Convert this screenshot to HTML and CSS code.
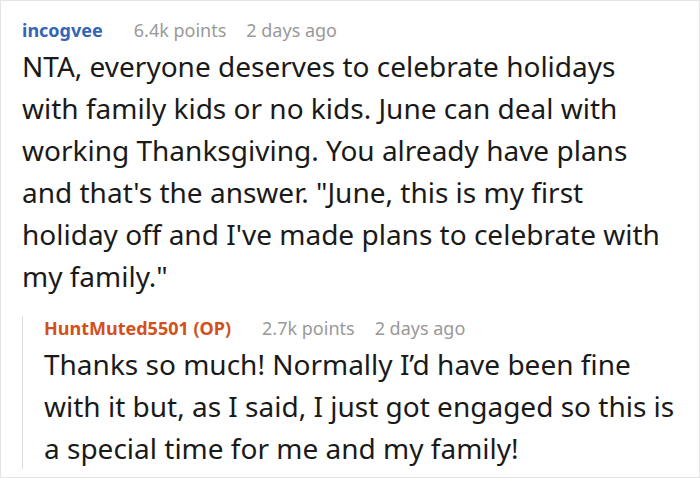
FILE: index.html
```html
<!DOCTYPE html>
<html>
<head>
<meta charset="utf-8">
<link rel="stylesheet" href="styles.css">
</head>
<body>
<div class="card">
  <div class="comment">
    <div class="meta">
      <span class="user">incogvee</span>
      <span class="info">6.4k points</span>
      <span class="info">2 days ago</span>
    </div>
    <p class="body">NTA, everyone deserves to celebrate holidays with family kids or no kids. June can deal with working Thanksgiving. You already have plans and that's the answer. "June, this is my first holiday off and I've made plans to celebrate with my family."</p>
    <div class="reply">
      <div class="meta">
        <span class="user op">HuntMuted5501 (OP)</span>
        <span class="info">2.7k points</span>
        <span class="info">2 days ago</span>
      </div>
      <p class="body">Thanks so much! Normally I’d have been fine with it but, as I said, I just got engaged so this is a special time for me and my family!</p>
    </div>
  </div>
</div>
</body>
</html>
```
FILE: styles.css
```css
html, body {
  margin: 0;
  padding: 0;
  background: #fff;
}
body {
  font-family: "Noto Sans", "DejaVu Sans", sans-serif;
}
.card {
  box-sizing: border-box;
  width: 700px;
  height: 478px;
  border: 1px solid #e4e4e4;
  padding: 17px 30px 0 21px;
  overflow: hidden;
}
.meta {
  display: flex;
  gap: 20px;
  font-size: 18px;
  line-height: 24px;
}
.user {
  font-weight: 700;
  color: #3465b5;
  margin-right: 11px;
}
.user.op {
  color: #d2501c;
}
.info {
  color: #999;
}
.body {
  margin: 3px 0 0;
  font-size: 28px;
  line-height: 42px;
  color: #1a1a1a;
}
.reply {
  margin-top: 19px;
  margin-right: -20px;
  border-left: 1px solid #dcdcdc;
  padding-left: 21px;
}
```
